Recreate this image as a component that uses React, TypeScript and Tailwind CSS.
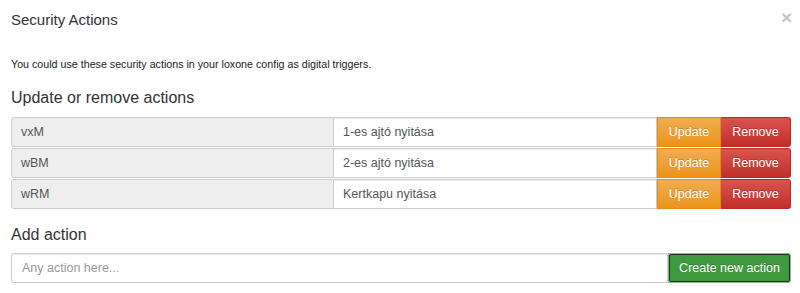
import React from 'react'

interface SecurityAction {
  id: string
  name: string
}

const actions: SecurityAction[] = [
  { id: 'vxM', name: '1-es ajtó nyitása' },
  { id: 'wBM', name: '2-es ajtó nyitása' },
  { id: 'wRM', name: 'Kertkapu nyitása' }
]

const App: React.FC = () => {
  return (
    <div
      className="w-[800px] h-[293px] bg-white text-[#333] overflow-hidden"
      style={{ fontFamily: '"Liberation Sans", Arial, sans-serif' }}
    >
      {/* Header */}
      <div className="flex items-start justify-between pl-[11px] pr-[8px] pt-[10px]">
        <div className="text-[15px] leading-[20px]">Security Actions</div>
        <button className="text-[19px] leading-[14px] font-bold text-[#c4c4c4] mt-[1px]">×</button>
      </div>

      {/* Body */}
      <div className="pl-[11px] pr-[9px]">
        <p className="mt-[26px] text-[10.7px] leading-[16px] text-[#222]">
          You could use these security actions in your loxone config as digital triggers.
        </p>

        <div className="mt-[15px] text-[16px] leading-[22px]">Update or remove actions</div>

        <div className="mt-[8px] flex flex-col gap-px">
          {actions.map((action) => (
            <div key={action.id} className="flex h-[30px] text-[12.5px]">
              <div className="w-[323px] flex items-center pl-[9px] bg-[#eee] border border-[#ccc] rounded-l-[3px] text-[#555]">
                {action.id}
              </div>
              <div className="w-[323px] flex items-center pl-[9px] bg-white border border-l-0 border-[#ccc] text-[#555] shadow-[inset_0_1px_1px_rgba(0,0,0,0.075)]">
                {action.name}
              </div>
              <button className="w-[64px] flex items-center justify-center text-white border border-[#e38d13] bg-gradient-to-b from-[#f0ad4e] to-[#eb9316] [text-shadow:0_-1px_0_rgba(0,0,0,0.2)]">
                Update
              </button>
              <button className="w-[70px] flex items-center justify-center text-white border border-l-0 border-[#b92c28] rounded-r-[3px] bg-gradient-to-b from-[#d9534f] to-[#c12e2a] [text-shadow:0_-1px_0_rgba(0,0,0,0.2)]">
                Remove
              </button>
            </div>
          ))}
        </div>

        <div className="mt-[15px] text-[16px] leading-[22px]">Add action</div>

        <div className="mt-[7px] flex h-[30px] text-[12.5px]">
          <div className="flex-1 flex items-center pl-[10px] bg-white border border-[#ccc] rounded-l-[3px] text-[#999] shadow-[inset_0_1px_1px_rgba(0,0,0,0.075)]">
            Any action here...
          </div>
          <div className="w-[123px] p-px rounded-r-[3px] bg-[#8fb88f]">
            <button className="w-full h-full flex items-center justify-center text-white border border-[#1f331f] rounded-[2px] bg-[#3f9a3f] [text-shadow:0_-1px_0_rgba(0,0,0,0.2)]">
              Create new action
            </button>
          </div>
        </div>
      </div>
    </div>
  )
}

export default App
